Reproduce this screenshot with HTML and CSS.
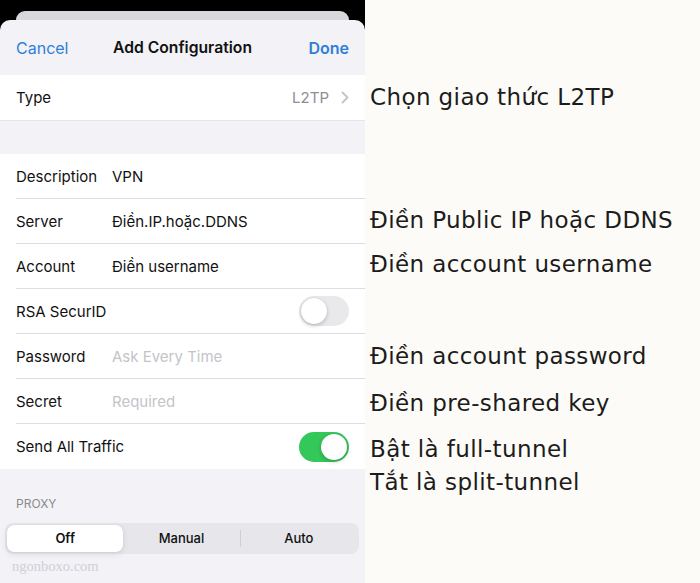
FILE: index.html
```html
<!DOCTYPE html>
<html>
<head>
  <title>Add Configuration</title>
  <link rel="stylesheet" href="styles.css">
</head>
<body>
  <div class="phone">
    <div class="back-card"></div>
    <div class="sheet">
      <div class="nav">
        <span class="nav-btn">Cancel</span>
        <span class="nav-title">Add Configuration</span>
        <span class="nav-btn done">Done</span>
      </div>

      <div class="group single">
        <div class="row">
          <span class="label">Type</span>
          <span class="type-value">L2TP</span>
          <svg class="chevron" width="8" height="13" viewBox="0 0 8 13">
            <path d="M1.5 1.5 L6.5 6.5 L1.5 11.5" fill="none" stroke="#c4c4c7" stroke-width="1.8" stroke-linecap="round" stroke-linejoin="round"/>
          </svg>
        </div>
      </div>

      <div class="group">
        <div class="row">
          <span class="label">Description</span>
          <span class="value">VPN</span>
        </div>
        <div class="row">
          <span class="label">Server</span>
          <span class="value">Điền.IP.hoặc.DDNS</span>
        </div>
        <div class="row">
          <span class="label">Account</span>
          <span class="value">Điền username</span>
        </div>
        <div class="row">
          <span class="label">RSA SecurID</span>
          <span class="switch"><span class="knob"></span></span>
        </div>
        <div class="row">
          <span class="label">Password</span>
          <span class="value placeholder">Ask Every Time</span>
        </div>
        <div class="row">
          <span class="label">Secret</span>
          <span class="value placeholder">Required</span>
        </div>
        <div class="row">
          <span class="label">Send All Traffic</span>
          <span class="switch on"><span class="knob"></span></span>
        </div>
      </div>

      <div class="section-header">PROXY</div>
      <div class="segmented">
        <span class="segment selected">Off</span>
        <span class="segment">Manual</span>
        <span class="segment divided">Auto</span>
      </div>
      <div class="watermark">ngonboxo.com</div>
    </div>
  </div>

  <div class="notes">
    <div class="note n1">Chọn giao thức L2TP</div>
    <div class="note n2">Điền Public IP hoặc DDNS</div>
    <div class="note n3">Điền account username</div>
    <div class="note n4">Điền account password</div>
    <div class="note n5">Điền pre-shared key</div>
    <div class="note n6">Bật là full-tunnel<br>Tắt là split-tunnel</div>
  </div>
</body>
</html>
```

FILE: styles.css
```css
body {
  margin: 0;
  display: flex;
  width: 700px;
  height: 583px;
  overflow: hidden;
  font-family: Inter, "Liberation Sans", sans-serif;
}

.phone {
  width: 365px;
  flex-shrink: 0;
  background: #000;
  display: flex;
  flex-direction: column;
}

.back-card {
  margin: 11px 16px 0;
  height: 9px;
  background: #d8d8dc;
  border-radius: 9px 9px 0 0;
}

.sheet {
  flex: 1;
  background: #f2f2f7;
  border-radius: 10px 10px 0 0;
}

.nav {
  height: 55px;
  display: grid;
  grid-template-columns: 1fr auto 1fr;
  align-items: center;
  padding: 0 16px;
}

.nav-btn {
  color: #2f7fd9;
  font-size: 16px;
}

.nav-btn.done {
  font-weight: 600;
  text-align: right;
}

.nav-title {
  font-size: 15.7px;
  font-weight: 600;
  color: #111;
}

.group {
  background: #fff;
  margin-bottom: 33px;
}

.group.single {
  border-bottom: 1px solid #e6e6ea;
}

.row {
  height: 44px;
  display: flex;
  align-items: center;
  margin-left: 16px;
  padding-right: 16px;
  border-bottom: 1px solid #dedee2;
  font-size: 15px;
  color: #111;
}

.group .row:last-child {
  border-bottom: none;
  height: 45px;
}

.label {
  min-width: 96px;
  white-space: nowrap;
}

.value {
  flex: 1;
}

.placeholder {
  color: #c4c4c8;
}

.type-value {
  margin-left: auto;
  color: #8e8e93;
  margin-right: 12px;
}

.switch {
  margin-left: auto;
  width: 50px;
  height: 30px;
  border-radius: 15px;
  background: #e9e9eb;
  position: relative;
}

.switch .knob {
  position: absolute;
  top: 2px;
  left: 2px;
  width: 26px;
  height: 26px;
  border-radius: 50%;
  background: #fff;
  box-shadow: 0 2px 4px rgba(0, 0, 0, 0.18), 0 0 1px rgba(0, 0, 0, 0.2);
}

.switch.on {
  background: #34c759;
}

.switch.on .knob {
  left: 22px;
}

.section-header {
  margin-top: -33px;
  padding: 28px 16px 12px;
  font-size: 12px;
  color: #8a8a8e;
  height: 14px;
  line-height: 14px;
}

.segmented {
  margin: 0 6px 0 5px;
  height: 31px;
  background: #e6e6eb;
  border-radius: 8px;
  display: flex;
  align-items: center;
  padding: 0 2px;
}

.segment {
  flex: 1;
  text-align: center;
  font-size: 13px;
  font-weight: 500;
  color: #111;
  line-height: 27px;
}

.segment.selected {
  background: #fff;
  border-radius: 7px;
  font-weight: 600;
  box-shadow: 0 2px 6px rgba(0, 0, 0, 0.1), 0 0 1px rgba(0, 0, 0, 0.15);
}

.segment.divided {
  border-left: 1px solid #cfcfd4;
  line-height: 17px;
}

.watermark {
  padding: 4px 0 0 12px;
  font-family: "Liberation Serif", serif;
  font-size: 14.5px;
  color: #d0d0d4;
}

.notes {
  flex: 1;
  background: #fdfbf7;
  padding-left: 5px;
  font-family: "DejaVu Sans", sans-serif;
  font-size: 23px;
  letter-spacing: 0.4px;
  color: #1c1c1c;
}

.note {
  line-height: 30px;
}

.n1 { margin-top: 82px; }
.n2 { margin-top: 93px; }
.n3 { margin-top: 14px; }
.n4 { margin-top: 62px; }
.n5 { margin-top: 17px; }
.n6 { margin-top: 15px; line-height: 33px; }
```
